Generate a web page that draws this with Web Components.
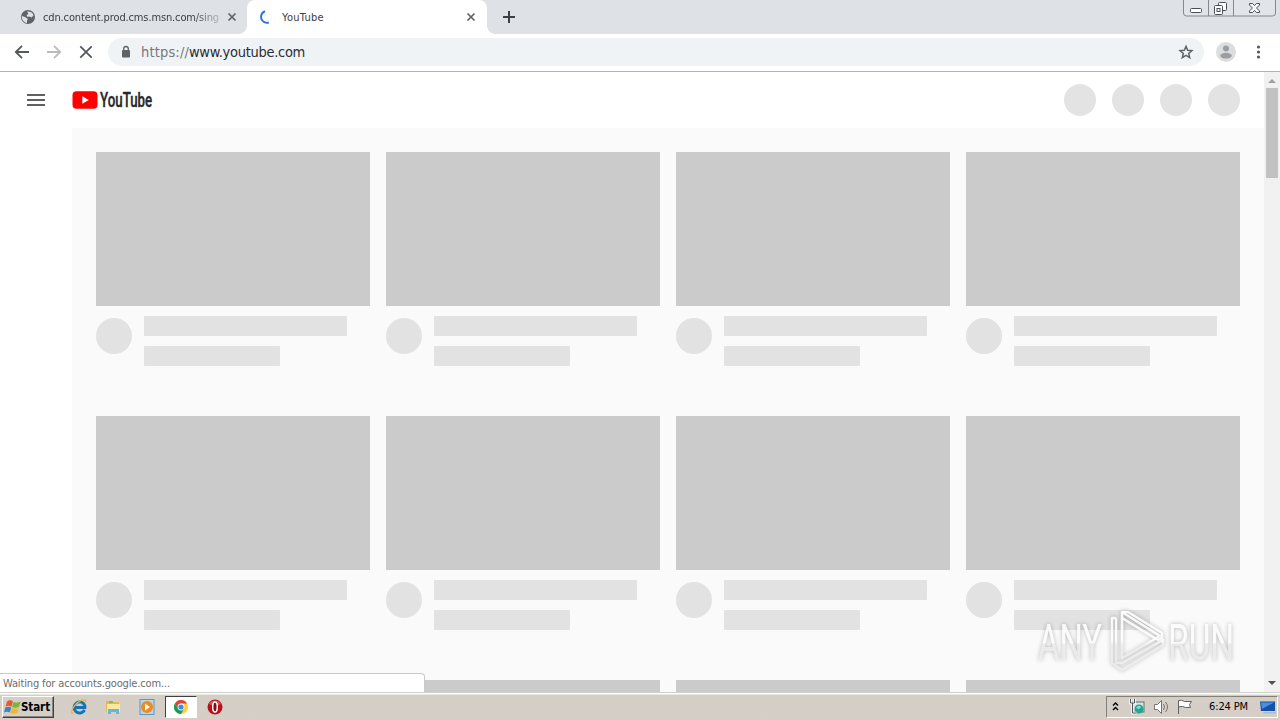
<!doctype html>
<html lang="en">
<head>
    <meta charset="utf-8">
    <title>YouTube</title>
    <style>
        html, body {
            margin: 0;
            height: 100%;
            overflow: hidden;
        }

        body {
            display: flex;
            flex-direction: column;
            position: relative;
            width: 1280px;
            height: 720px;
            background: #fff;
            color: #3c4043;
            font: 11px "DejaVu Sans Condensed", "DejaVu Sans", sans-serif;
        }
    </style>
</head>
<body>
<tab-strip>
    <browser-tab>
        <svg slot="icon" width="16" height="16" viewBox="0 0 16 16"><circle cx="8" cy="8" r="7" fill="#5f6368"/><path d="M2 7l3 1 3 2-1 1.500v2.500C3 13.500 1.500 10 2 7zM7 2.500c3-.5 6 1 6.500 4l-2 2-2-1-2 .5-1-2 2-1z" fill="#dee1e6"/></svg>
        <fit-text width="176">cdn.content.prod.cms.msn.com/sing</fit-text>
    </browser-tab>
    <browser-tab active>
        <svg slot="icon" width="16" height="16" viewBox="0 0 16 16"><path d="M8 2.300A5.800 5.800 0 0 0 11.800 13.500" fill="none" stroke="#2a72e0" stroke-width="2"/></svg>
        <fit-text width="42">YouTube</fit-text>
    </browser-tab>
</tab-strip>
<tool-bar><fit-text width="48" style="color:#74797e">https://</fit-text><fit-text width="116" style="color:#2a2d31">www.youtube.com</fit-text></tool-bar>
<web-page>
    <page-header slot="header"></page-header>
    <video-grid></video-grid>
</web-page>
<status-bubble><fit-text width="167">Waiting for accounts.google.com...</fit-text></status-bubble>
<any-run></any-run>
<task-bar></task-bar>

<template id="tab-strip">
    <style>
        :host {
            display: flex;
            flex: none;
            position: relative;
            height: 34px;
            padding-left: 7px;
            background: #dee1e6;
        }

        .plus {
            margin: 10px 0 0 15px;
        }

        .controls {
            position: absolute;
            top: 0;
            right: 3px;
        }
    </style>
    <slot></slot>
    <svg class="plus" width="14" height="14"><path d="M7 1v12M1 7h12" stroke="#3c4043" stroke-width="2"/></svg>
    <svg class="controls" width="94" height="18" fill="none">
        <path d="M.5 0v13a3 3 0 0 0 3 3h86a3 3 0 0 0 3-3V0" stroke="#85888f" fill="#e1e4e8"/>
        <path d="M25.500 0v16M50.500 0v16" stroke="#85888f"/>
        <g stroke="#4a4e57">
            <rect x="7.500" y="8.500" width="11" height="4" rx="1" fill="#fff"/>
            <rect x="35.500" y="2.500" width="8" height="8" rx="1" fill="#fff"/>
            <rect x="31.500" y="5.500" width="8" height="9" rx="1" fill="#fff"/>
            <rect x="34" y="8.500" width="3" height="3"/>
            <path d="M66.500 3.500h3l2 2.200 2-2.200h3v1.500l-3 3 3 3v1.500h-3l-2-2.200-2 2.200h-3V11l3-3-3-3z" fill="#fff"/>
        </g>
    </svg>
</template>

<template id="browser-tab">
    <style>
        :host {
            display: flex;
            flex: none;
            align-items: center;
            position: relative;
            box-sizing: border-box;
            width: 240px;
            height: 34px;
            padding: 0 9px 0 13px;
        }

        :host([active]) {
            padding: 0 10px;
            border-radius: 8px 8px 0 0;
            background: #fff;
        }

        :host([active])::before, :host([active])::after {
            content: "";
            position: absolute;
            bottom: 0;
            left: -8px;
            width: 8px;
            height: 8px;
            background: radial-gradient(circle at 0 0, #dee1e6 7.5px, #fff 8px);
        }

        :host([active])::after {
            left: auto;
            right: -8px;
            background: radial-gradient(circle at 100% 0, #dee1e6 7.5px, #fff 8px);
        }

        .title {
            flex: 1;
            margin-left: 7px;
            padding-top: 1px;
        }

        :host([active]) .title {
            margin-left: 9px;
        }

        :host(:not([active])) .title {
            -webkit-mask-image: linear-gradient(90deg, #000 150px, rgba(0, 0, 0, .25) 176px);
        }
    </style>
    <slot name="icon"></slot>
    <div class="title"><slot></slot></div>
    <svg width="12" height="12"><path d="M2.500 2.500l7 7m0-7l-7 7" stroke="#5f6368" stroke-width="1.700"/></svg>
</template>

<template id="tool-bar">
    <style>
        :host {
            display: flex;
            flex: none;
            align-items: center;
            box-sizing: border-box;
            height: 38px;
            padding: 0 12px 2px;
            border-bottom: 1px solid #b3b3ae;
            background: #fff;
            font-size: 14.5px;
        }

        .nav {
            display: flex;
            gap: 12px;
        }

        .address {
            display: flex;
            align-items: center;
            box-sizing: border-box;
            width: 1096px;
            height: 28px;
            margin-left: 12px;
            padding: 0 8px 0 10px;
            border-radius: 14px;
            background: #f0f3f5;
        }

        .lock {
            margin-right: 7px;
        }

        .star {
            margin-left: auto;
        }

        .user {
            margin-left: 12px;
        }

        .dots {
            margin-left: 12px;
        }
    </style>
    <div class="nav">
        <svg width="20" height="20" fill="none" stroke="#55585c" stroke-width="1.800"><path d="M17 10H4M10 3.800L3.800 10l6.200 6.200"/></svg>
        <svg width="20" height="20" fill="none" stroke="#b9bbbd" stroke-width="1.800"><path d="M3 10h13M10 3.800l6.200 6.200-6.200 6.200"/></svg>
        <svg width="20" height="20" fill="none" stroke="#55585c" stroke-width="1.800"><path d="M4.300 4.300l11.400 11.400m0-11.400L4.300 15.700"/></svg>
    </div>
    <div class="address">
        <svg class="lock" width="16" height="16"><path d="M5.700 7V4.800a2.300 2.300 0 0 1 4.600 0V7" fill="none" stroke="#5f6368" stroke-width="1.300"/><rect x="4" y="6" width="8" height="7.500" rx="1" fill="#5f6368"/></svg>
        <slot></slot>
        <svg class="star" width="20" height="20"><path d="M10 4.300l1.700 3.900 4.200.4-3.200 2.800 1 4.200-3.700-2.200-3.700 2.200 1-4.200-3.200-2.800 4.200-.4z" fill="none" stroke="#5f6368" stroke-width="1.500"/></svg>
    </div>
    <svg class="user" width="20" height="20"><circle cx="10" cy="10" r="10" fill="#dcdddf"/><circle cx="10" cy="6.500" r="3" fill="#9b9ea1"/><ellipse cx="10" cy="13.700" rx="5.800" ry="2.900" fill="#9b9ea1"/></svg>
    <svg class="dots" width="20" height="20" fill="#55585c"><circle cx="10.500" cy="5" r="1.600"/><circle cx="10.500" cy="10" r="1.600"/><circle cx="10.500" cy="15" r="1.600"/></svg>
</template>

<template id="web-page">
    <style>
        :host {
            display: flex;
            flex: none;
            height: 620px;
            overflow: hidden;
        }

        .view {
            display: flex;
            flex-direction: column;
            width: 1264px;
        }

        .bar {
            display: flex;
            flex-direction: column;
            align-items: center;
            justify-content: space-between;
            width: 16px;
            background: #f1f1f1;
        }

        .thumb {
            width: 12px;
            height: 90px;
            margin-bottom: auto;
            background: #c1c1c1;
        }
    </style>
    <div class="view">
        <slot name="header"></slot>
        <slot></slot>
    </div>
    <div class="bar">
        <svg width="16" height="16"><path d="M4 11h8L8 7z" fill="#a0a0a0"/></svg>
        <div class="thumb"></div>
        <svg width="16" height="16"><path d="M4 5h8l-4 4z" fill="#505050"/></svg>
    </div>
</template>

<template id="page-header">
    <style>
        :host {
            display: flex;
            flex: none;
            align-items: center;
            box-sizing: border-box;
            height: 56px;
            padding: 0 24px;
        }

        .logo {
            margin-left: 24px;
        }

        .buttons {
            display: flex;
            gap: 16px;
            margin-left: auto;
        }

        .buttons i {
            width: 32px;
            height: 32px;
            border-radius: 50%;
            background: #e3e3e3;
        }
    </style>
    <svg width="24" height="24"><path d="M3 7h18M3 12h18M3 17h18" stroke="#606060" stroke-width="2"/></svg>
    <svg class="logo" width="82" height="24">
        <rect x="0.500" y="3.200" width="25" height="17.600" rx="4" fill="#f00"/>
        <path d="M10.300 8.300v7.500l6.500-3.750z" fill="#fff"/>
        <g transform="translate(28 19.400) scale(.6 1)"><text font-family="Roboto" font-weight="500" font-size="20.500" fill="#282828" stroke="#282828" stroke-width=".4" textLength="87" lengthAdjust="spacingAndGlyphs">YouTube</text></g>
    </svg>
    <div class="buttons"><i></i><i></i><i></i><i></i></div>
</template>

<template id="video-grid">
    <style>
        :host {
            display: grid;
            flex: 1;
            grid-template-columns: repeat(4, 274px);
            grid-auto-rows: 264px;
            column-gap: 16px;
            min-height: 0;
            margin-left: 72px;
            padding: 24px 24px 0;
            overflow: hidden;
            background: #fafafa;
        }
    </style>
</template>

<template id="ghost-card">
    <style>
        :host {
            display: block;
        }

        .thumbnail {
            height: 154px;
            background: #cbcbcb;
        }

        .details {
            display: flex;
            gap: 12px;
            padding-top: 10px;
        }

        .avatar {
            width: 36px;
            height: 36px;
            margin-top: 2px;
            border-radius: 50%;
            background: #e2e2e2;
        }

        .line {
            width: 203px;
            height: 20px;
            margin-bottom: 10px;
            border-radius: 1px;
            background: #e2e2e2;
        }

        .short {
            width: 136px;
        }
    </style>
    <div class="thumbnail"></div>
    <div class="details">
        <div class="avatar"></div>
        <div>
            <div class="line"></div>
            <div class="line short"></div>
        </div>
    </div>
</template>

<template id="status-bubble">
    <style>
        :host {
            display: flex;
            align-items: center;
            position: absolute;
            left: 0;
            bottom: 28px;
            box-sizing: border-box;
            width: 425px;
            height: 19px;
            padding: 2px 0 0 3px;
            border: solid #c9c9c9;
            border-width: 1px 1px 0 0;
            border-radius: 0 4px 0 0;
            background: #fff;
            color: #6c6c6c;
        }
    </style>
    <slot></slot>
</template>

<template id="any-run">
    <style>
        :host {
            position: absolute;
            left: 1030px;
            top: 603px;
        }

        svg {
            display: block;
            filter: drop-shadow(0 0 2px rgba(0, 0, 0, .3));
        }
    </style>
    <svg width="210" height="76" fill="none">
        <defs>
            <linearGradient id="shine" gradientUnits="userSpaceOnUse" x1="0" y1="-17" x2="0" y2="-15">
                <stop offset="0" stop-color="#fff" stop-opacity=".9"/>
                <stop offset="1" stop-color="#eee" stop-opacity=".85"/>
            </linearGradient>
            <linearGradient id="edge" gradientUnits="userSpaceOnUse" x1="0" y1="37" x2="0" y2="43">
                <stop offset="0" stop-color="#fff" stop-opacity=".9"/>
                <stop offset="1" stop-color="#eee" stop-opacity=".85"/>
            </linearGradient>
        </defs>
        <g font-family="Roboto" font-size="50" font-weight="400" fill="url(#shine)">
            <g transform="translate(8 56.500) scale(.72 1)"><text textLength="89" lengthAdjust="spacingAndGlyphs">ANY</text></g>
            <g transform="translate(138 56.500) scale(.72 1)"><text textLength="92" lengthAdjust="spacingAndGlyphs">RUN</text></g>
        </g>
        <g stroke="url(#edge)" stroke-width="2.500" stroke-linejoin="round">
            <path d="M92 9v46l38-22zM86 15h-4v45l10 7 41-25v-5L92 60H86V15"/>
            <path d="M92 9h6l34 21v5l-4 2-36-22"/>
        </g>
    </svg>
</template>

<template id="task-bar">
    <style>
        :host {
            display: flex;
            flex: none;
            align-items: center;
            box-sizing: border-box;
            height: 28px;
            padding: 2px 2px 1px;
            border-top: 1px solid #d0d0ca;
            background: linear-gradient(#fff 1px, #d4cfc5 2px, #d6cec8);
            color: #000;
        }

        .start {
            display: flex;
            align-items: center;
            box-sizing: border-box;
            width: 52px;
            height: 22px;
            margin-right: 9px;
            padding-left: 1px;
            border: 1px solid;
            border-color: #fff #404040 #404040 #fff;
            box-shadow: inset -1px -1px #8a857e;
            font-size: 11.5px;
            font-weight: bold;
        }

        .app {
            display: grid;
            place-items: center;
            box-sizing: border-box;
            width: 32px;
            height: 22px;
            margin-right: 2px;
        }

        .pressed {
            border: 1px solid;
            border-color: #404040 #fff #fff #404040;
            background: #fff;
        }

        .tray {
            display: flex;
            align-items: center;
            box-sizing: border-box;
            width: 172px;
            height: 22px;
            margin-left: auto;
            padding-left: 4px;
            border: 1px solid;
            border-color: #85807a #fff #fff #85807a;
        }
    </style>
    <div class="start">
        <svg width="17" height="18">
            <path d="M3 3.500q3-2.300 6 0L7.500 8.700Q4.500 7 1.600 8.700z" fill="#e9592b"/>
            <path d="M9.600 4q3 1.500 7-.5l-1.600 5.500q-3.500 1.500-7 0z" fill="#75b63b"/>
            <path d="M1.300 9.500q3-1.500 6 0l-1.500 5Q3 13 0 14.500z" fill="#3a84ce"/>
            <path d="M7.800 9.800q3 1.600 7 .2l-1.500 5q-3.500 1.500-7-.2z" fill="#f2b829"/>
        </svg>
        <fit-text width="29">Start</fit-text>
    </div>
    <div class="app">
        <svg width="18" height="18" fill="none">
            <path d="M14.500 12a5.500 5.500 0 1 1 .3-4.300V9.500H5" stroke="#1671bc" stroke-width="3"/>
            <path d="M13 7.500A4 4 0 0 0 6 7" stroke="#48b6ec"/>
            <path d="M3 15.500C-1 15 5 4.500 12 2.200c3-1 4.500 0 3.500 2.300" stroke="#e6b632" stroke-width="1.300"/>
        </svg>
    </div>
    <div class="app">
        <svg width="18" height="18">
            <path d="M2 3h5l1 1h7v10H2z" fill="#dfb951"/>
            <path d="M3 6h13v8H3z" fill="#f9e9a0"/>
            <path d="M4 16v-5h11v5h-3v-2H7v2z" fill="#67b6d8"/>
            <path d="M5 4h4" stroke="#4ba94b"/>
        </svg>
    </div>
    <div class="app">
        <svg width="18" height="18">
            <rect x="2" y="1.500" width="14" height="15" fill="#b8d5ec" stroke="#5c97c9"/>
            <circle cx="9" cy="9" r="6" fill="#f08a1b"/>
            <path d="M7 5.500v7l5-3.500z" fill="#fff"/>
        </svg>
    </div>
    <div class="app pressed">
        <svg width="14" height="14" viewBox="0 0 14 14">
            <circle cx="7" cy="7" r="7" fill="#ffcd40"/>
            <path d="M.9 3.500A7 7 0 0 1 13.100 3.500H7L4 8.800z" fill="#db4437"/>
            <path d="M.9 3.500A7 7 0 0 0 7 14l3-5.200H4z" fill="#0f9d58"/>
            <circle cx="7" cy="7" r="3.400" fill="#fff"/>
            <circle cx="7" cy="7" r="2.600" fill="#4285f4"/>
        </svg>
    </div>
    <div class="app">
        <svg width="16" height="16"><circle cx="8" cy="8" r="7.500" fill="#b81119"/><path d="M2 5a7 7 0 0 1 12 0q-6 3-12 0z" fill="#dc5450"/><ellipse cx="8" cy="8" rx="2.300" ry="5" fill="#801015" stroke="#fff" stroke-width="1.500"/></svg>
    </div>
    <div class="tray">
        <svg width="10" height="14" fill="none" stroke="#000" stroke-width="1.400"><path d="M2 5.500L4.500 3 7 5.500M2 10l2.500-2.500L7 10"/></svg>
        <svg style="margin-left:7px" width="18" height="18">
            <rect x="5" y="4" width="11" height="10" fill="#d8e5e3" stroke="#5c7774"/>
            <circle cx="11" cy="11" r="4.500" fill="#24a593"/>
            <path d="M8 10q3-4 5-1l-2 2z" fill="#92dfce"/>
            <path d="M2.500 1v4h4V1M4.500 5v10h4" fill="none" stroke="#fff" stroke-width="2.500"/>
            <path d="M2.500 1v4h4V1M4.500 5v10h4" fill="none" stroke="#4d5557"/>
        </svg>
        <svg style="margin-left:7px" width="18" height="18" stroke="#77736f" fill="#fff">
            <path d="M1.500 6.500h3l4-4v13l-4-4h-3z"/>
            <path d="M10.500 6q2 3 0 6M12.500 4q4 5 0 10" fill="none"/>
        </svg>
        <svg style="margin-left:5px" width="18" height="18" stroke="#65615e" fill="#fff"><path d="M2.500 16V2.500q3-1 6 1h7l-2 3 1 3h-5q-3-2-7-.5"/></svg>
        <fit-text style="margin-left:15px" width="39">6:24 PM</fit-text>
        <svg style="margin-left:12px" width="16" height="16"><path d="M0 2.500h15v9.500H1z" fill="#1751a7"/><path d="M1 3.500h13L2 10z" fill="#4a8fdd"/><path d="M3 13h13v1.500H4z" fill="#a6bdd8"/></svg>
    </div>
</template>

<script>
    "use strict";

    class TemplateElement extends HTMLElement {
        constructor() {
            super();
            const template = document.getElementById(this.localName);
            const shadow = this.attachShadow({mode: 'open'});
            shadow.appendChild(template.content.cloneNode(true));
        }
    }

    // One line of text, spaced so that it takes up the given width.
    class FitText extends HTMLElement {
        constructor() {
            super();
            const shadow = this.attachShadow({mode: 'open'});
            shadow.innerHTML = `
                <style>
                    :host {
                        display: block;
                        flex: none;
                        height: 18px;
                        line-height: 18px;
                    }

                    span {
                        display: inline-block;
                        white-space: pre;
                    }
                </style>
                <span><slot></slot></span>`;
        }

        connectedCallback() {
            const width = Number(this.getAttribute('width'));
            const span = this.shadowRoot.querySelector('span');
            const natural = span.getBoundingClientRect().width;
            this.style.width = width + 'px';
            span.style.letterSpacing = (width - natural) / this.textContent.length + 'px';
        }
    }

    class VideoGrid extends TemplateElement {
        constructor() {
            super();

            for(let i = 0; i < 12; i++) {
                this.shadowRoot.appendChild(document.createElement('ghost-card'));
            }
        }
    }

    window.customElements.define('tab-strip', class extends TemplateElement {});
    window.customElements.define('browser-tab', class extends TemplateElement {});
    window.customElements.define('tool-bar', class extends TemplateElement {});
    window.customElements.define('web-page', class extends TemplateElement {});
    window.customElements.define('page-header', class extends TemplateElement {});
    window.customElements.define('ghost-card', class extends TemplateElement {});
    window.customElements.define('video-grid', VideoGrid);
    window.customElements.define('status-bubble', class extends TemplateElement {});
    window.customElements.define('any-run', class extends TemplateElement {});
    window.customElements.define('task-bar', class extends TemplateElement {});
    window.customElements.define('fit-text', FitText);
</script>
</body>
</html>
